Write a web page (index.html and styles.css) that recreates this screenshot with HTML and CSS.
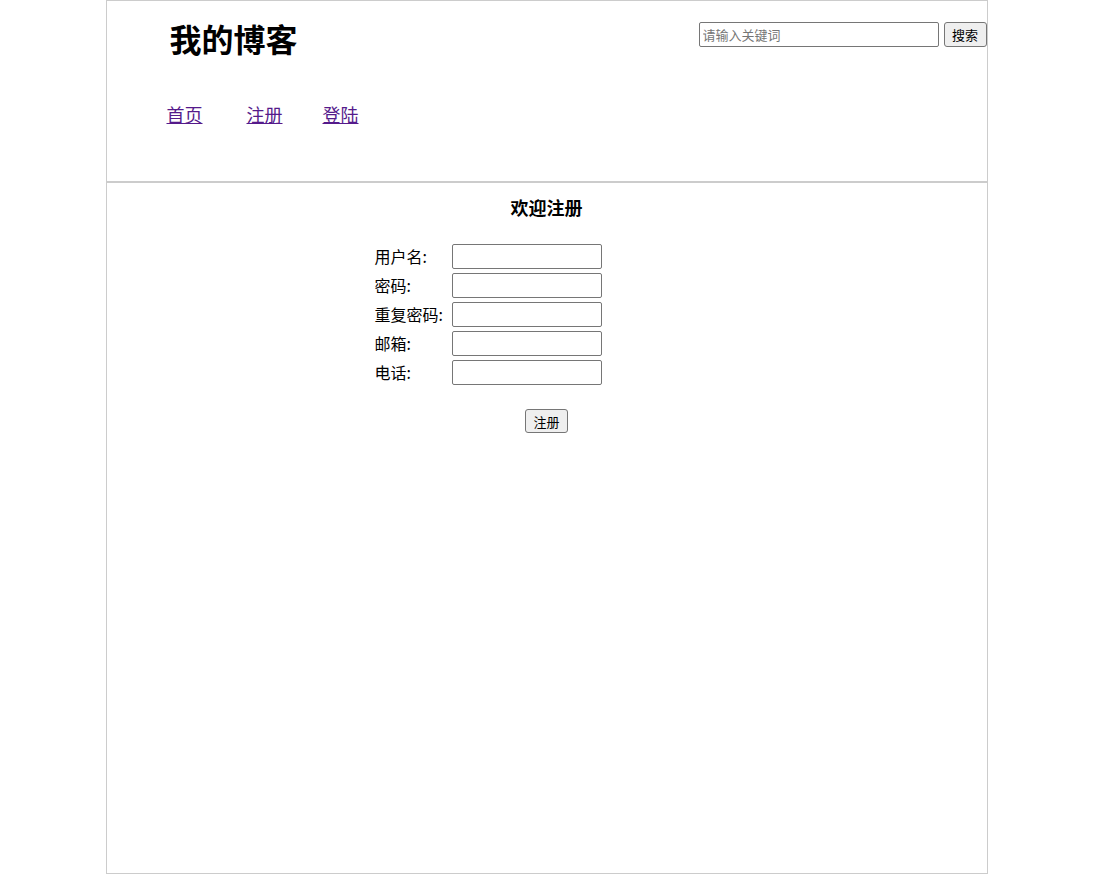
FILE: index.html
```html
<!DOCTYPE html>
<html lang="zh-CN">
<head>
<meta charset="utf-8">
<title>我的博客 - 注册</title>
<link rel="stylesheet" href="styles.css">
</head>
<body>
<div class="wrap">
  <div class="header">
    <div class="top">
      <h1 class="logo">我的博客</h1>
      <form class="search">
        <input class="search-input" type="text" placeholder="请输入关键词">
        <button class="btn search-btn" type="button">搜索</button>
      </form>
    </div>
    <nav class="nav">
      <a class="nav-link n1" href="#">首页</a>
      <a class="nav-link n2" href="#">注册</a>
      <a class="nav-link n3" href="#">登陆</a>
    </nav>
  </div>
  <div class="main">
    <h2 class="form-title">欢迎注册</h2>
    <form class="reg">
      <div class="grid">
        <label class="lbl">用户名:</label><input class="field" type="text">
        <label class="lbl">密码:</label><input class="field" type="password">
        <label class="lbl">重复密码:</label><input class="field" type="password">
        <label class="lbl">邮箱:</label><input class="field" type="text">
        <label class="lbl">电话:</label><input class="field" type="text">
      </div>
      <div class="submit-row"><button class="btn submit" type="button">注册</button></div>
    </form>
  </div>
</div>
</body>
</html>
```

FILE: styles.css
```css
html, body {
  margin: 0;
  padding: 0;
  background: #fff;
}
body {
  font-family: "Microsoft YaHei", "Noto Sans CJK SC", "Noto Sans", sans-serif;
  color: #000;
}
.wrap {
  width: 880px;
  height: 872px;
  margin: 0 auto;
  border: 1px solid #ccc;
}
.header {
  height: 180px;
  border-bottom: 2px solid #ccc;
}
.top {
  display: flex;
  justify-content: space-between;
  align-items: flex-start;
}
.logo {
  margin: 14px 0 0 63px;
  font-size: 32px;
  font-weight: bold;
  line-height: 46px;
}
.search {
  display: flex;
  gap: 5px;
  margin-top: 21px;
  margin-right: 0;
}
.search-input {
  width: 240px;
  height: 25px;
  box-sizing: border-box;
  border: 1px solid #767676;
  border-radius: 2px;
  padding: 0 3px;
  font-family: "Microsoft YaHei", "Noto Sans CJK SC", sans-serif;
  font-size: 13px;
  margin: 0;
}
.search-input::placeholder {
  color: #757575;
}
.btn {
  height: 25px;
  box-sizing: border-box;
  border: 1px solid #767676;
  border-radius: 3px;
  background: #efefef;
  font-family: "Microsoft YaHei", "Noto Sans CJK SC", sans-serif;
  font-size: 13px;
  padding: 0 6px;
  margin: 0;
  color: #000;
}
.search-btn {
  width: 43px;
}
.nav {
  display: flex;
  margin: 40px 0 0 60px;
}
.nav-link {
  font-size: 18px;
  line-height: 26px;
  color: #551a8b;
  text-decoration: underline;
}
.n1 { margin-right: 44px; }
.n2 { margin-right: 40px; }
.main {
  display: flex;
  flex-direction: column;
}
.form-title {
  margin: 11px 0 0 0;
  text-align: center;
  font-size: 18px;
  font-weight: bold;
  line-height: 26px;
}
.reg {
  margin: 24px 0 0 268px;
}
.grid {
  display: grid;
  grid-template-columns: 77px 150px;
  row-gap: 4px;
  align-items: center;
}
.lbl {
  font-size: 16px;
  line-height: 25px;
}
.field {
  width: 150px;
  height: 25px;
  box-sizing: border-box;
  border: 1px solid #767676;
  border-radius: 2px;
  margin: 0;
  padding: 0 3px;
}
.submit-row {
  display: flex;
  justify-content: center;
  width: 880px;
  margin: 24px 0 0 -268px;
}
.submit {
  width: 43px;
  height: 24px;
}
```
